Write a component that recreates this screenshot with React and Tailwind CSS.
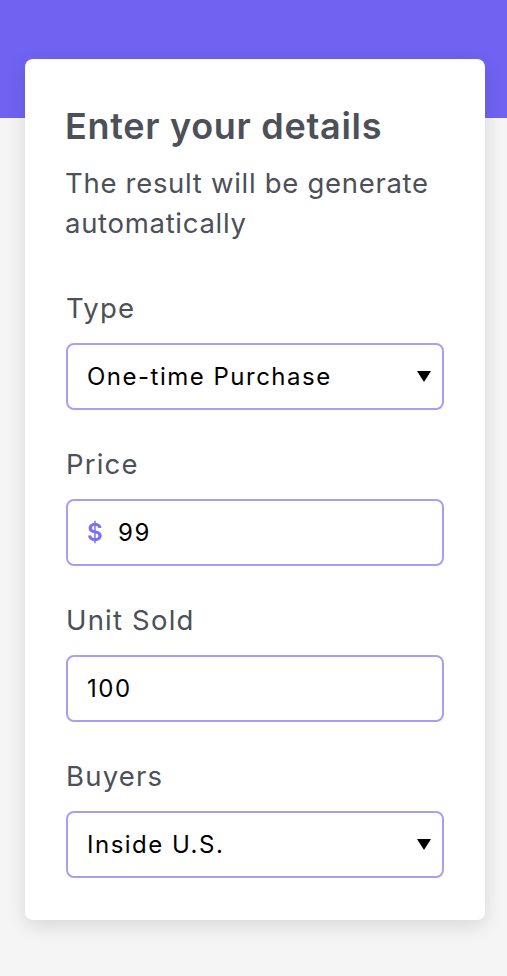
import React from "react";

const font = { fontFamily: "Inter, 'Noto Sans', sans-serif" };

function Field({ label, children }) {
  return (
    <div className="flex flex-col">
      <div className="text-[27.5px] leading-[32px] tracking-[1.2px] text-[#4b5059] mb-[19px]">{label}</div>
      {children}
    </div>
  );
}

function Box({ children }) {
  return (
    <div className="h-[67px] rounded-[8px] border-2 border-[#a99ef5] bg-white flex items-center pl-[19px] pr-[11px] pt-[1px] text-[24px] tracking-[1.5px] text-black">
      {children}
    </div>
  );
}

function Caret() {
  return (
    <svg width="14" height="11" viewBox="0 0 14 11" className="shrink-0 -mt-[2px]">
      <polygon points="0,0 14,0 7,11" fill="#000" />
    </svg>
  );
}

export default function App() {
  return (
    <div className="min-h-[976px] bg-[#f5f5f5]" style={font}>
      <div className="h-[118px] bg-[#7063f2]" />
      <div className="-mt-[59px] ml-[25px] w-[460px] bg-white rounded-[8px] shadow-[0_6px_20px_rgba(0,0,0,0.12)] px-[41px] pt-[47px] pb-[42px]">
        <h1 className="-ml-[1px] text-[36px] leading-[40px] font-semibold tracking-[0.7px] text-[#4b5059]">Enter your details</h1>
        <p className="-ml-[1px] mt-[17px] text-[27.5px] leading-[40px] tracking-[0.7px] text-[#4b5059]">
          The result will be generate automatically
        </p>
        <div className="mt-[49px] flex flex-col gap-[38px]">
          <Field label="Type">
            <Box>
              <span className="flex-1">One-time Purchase</span>
              <Caret />
            </Box>
          </Field>
          <Field label="Price">
            <Box>
              <span className="text-[#7d6ff3] font-semibold mr-[14px]">$</span>
              <span>99</span>
            </Box>
          </Field>
          <Field label="Unit Sold">
            <Box>
              <span>100</span>
            </Box>
          </Field>
          <Field label="Buyers">
            <Box>
              <span className="flex-1">Inside U.S.</span>
              <Caret />
            </Box>
          </Field>
        </div>
      </div>
    </div>
  );
}
